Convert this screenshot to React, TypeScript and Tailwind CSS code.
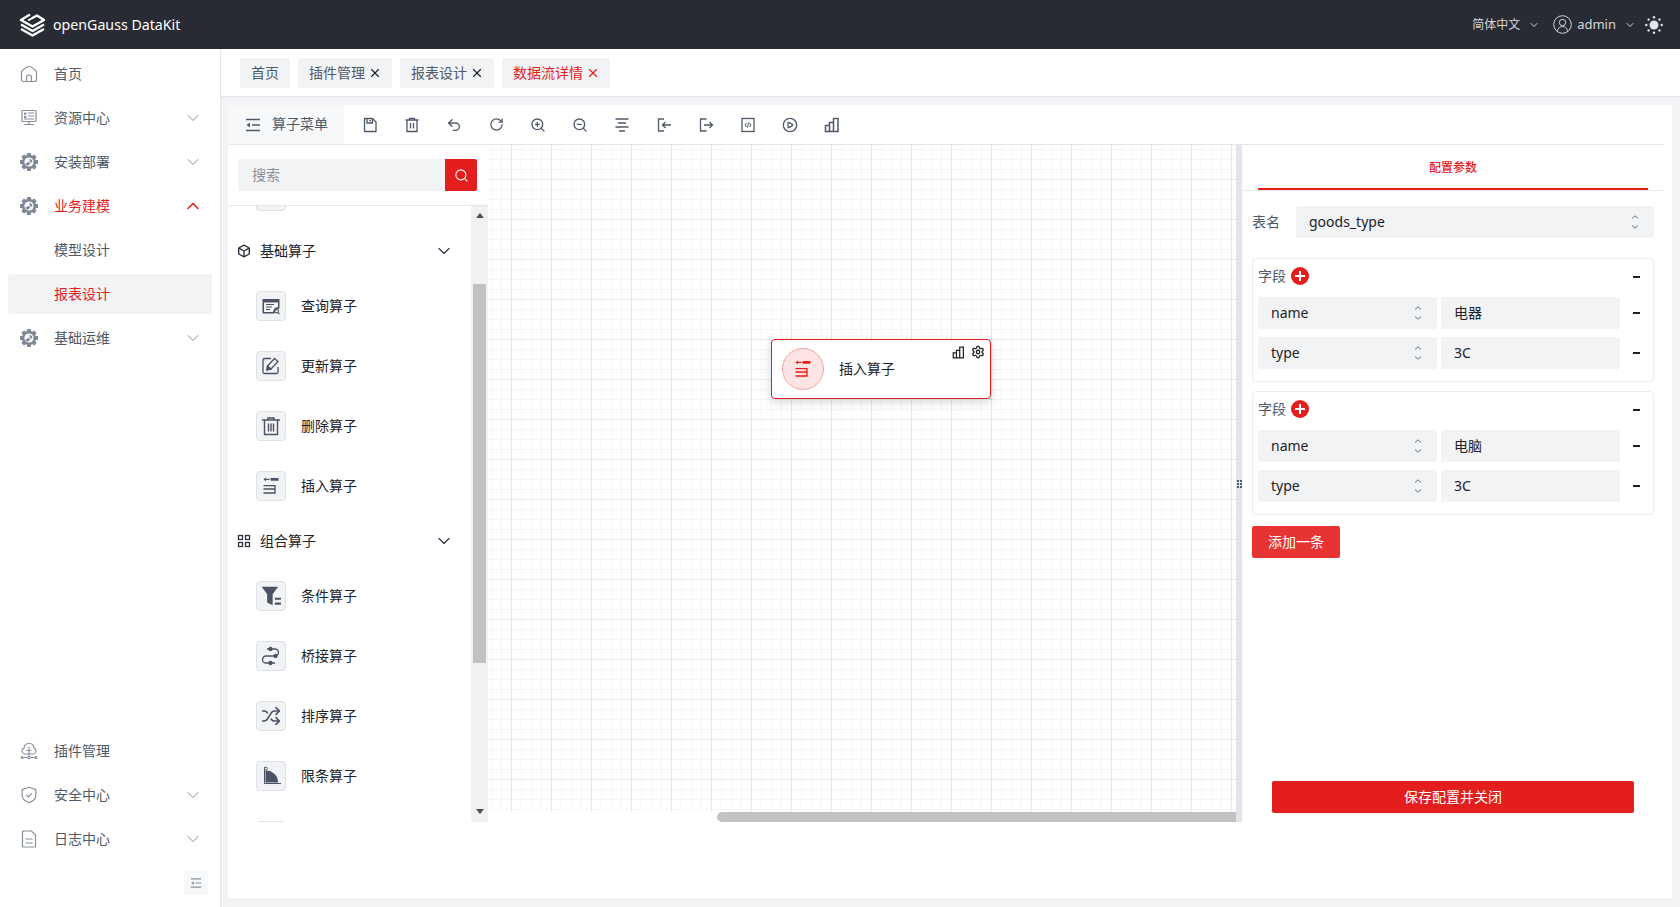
import type { ReactNode } from "react";
import { ChevronDown, ChevronUp, CirclePlay, RotateCw, Search, Settings, Shuffle, Undo2, X, ZoomIn, ZoomOut } from "lucide-react";

/* ---------- 小图标 ---------- */
type IconProps = { className?: string };

const LogoIcon = () => (
  <svg width="27" height="27" viewBox="0 0 27 27" fill="none" stroke="#fff" strokeWidth="2.4" strokeLinejoin="round">
    <path d="M11 3.500 2 9l11.500 6.500L25 9l-7-4.500-5 2.800" />
    <path d="M9 9.500l4.500-2.500" strokeWidth="2" />
    <path d="M2 13.500l11.500 6.500L25 13.500" />
    <path d="M2 18l11.500 6.500L25 18" />
  </svg>
);

const HomeIcon = () => (
  <svg width="18" height="18" viewBox="0 0 18 18" fill="none" stroke="#86909c" strokeWidth="1.200">
    <path d="M1.500 7.500c0-1 .5-1.700 1.200-2.300C4.500 3.700 6.500 1.500 9 1.500s4.500 2.200 6.300 3.700c.7.600 1.200 1.300 1.200 2.300v7a2 2 0 0 1-2 2h-11a2 2 0 0 1-2-2z" strokeLinejoin="round" />
    <path d="M6.500 16.500v-4a2.500 2.500 0 0 1 5 0v4" />
  </svg>
);

const MonitorIcon = () => (
  <svg width="18" height="18" viewBox="0 0 18 18" fill="none" stroke="#86909c" strokeWidth="1.200">
    <rect x="2" y="1.500" width="14" height="11" rx="1" />
    <path d="M8 4h6M8 7h6M4 10h10M9 12.500v2.500M4 15.500h10" />
    <rect x="4" y="3.500" width="2.400" height="2.200" fill="#86909c" stroke="none" />
    <rect x="4" y="6.800" width="2.400" height="2.200" fill="#86909c" stroke="none" />
  </svg>
);

const GearIcon = () => (
  <svg width="18" height="18" viewBox="0 0 18 18">
    <g fill="#7f8894">
      <circle cx="9" cy="9" r="7.200" />
      {[0, 45, 90, 135, 180, 225, 270, 315].map((deg) => (
        <rect key={deg} x="7" y="0" width="4" height="3.400" rx="0.600" transform={`rotate(${deg} 9 9)`} />
      ))}
    </g>
    <circle cx="9" cy="9" r="4.600" fill="#fff" />
    <path d="M9.600 5.800a3.200 3.200 0 0 1 2.600 4.100L9.600 8.800zM8.800 8.800l1.600 1.600-2.600 2.400a3.600 3.600 0 0 1-2.600-2z" fill="#7f8894" />
  </svg>
);

const CloudIcon = () => (
  <svg width="18" height="18" viewBox="0 0 18 18" fill="none" stroke="#86909c" strokeWidth="1.100">
    <path d="M4.500 12A3 3 0 0 1 4 6.200a5 5 0 0 1 10 0 3 3 0 0 1-.5 5.800z" />
    <path d="M9 5v9M6.500 8.500h5M1 15.500h16" />
    <circle cx="9" cy="15.500" r="1.200" fill="#fff" />
    <circle cx="2" cy="15.500" r="1" fill="#fff" />
    <circle cx="16" cy="15.500" r="1" fill="#fff" />
  </svg>
);

const ShieldIcon = () => (
  <svg width="18" height="18" viewBox="0 0 18 18" fill="none" stroke="#86909c" strokeWidth="1.200">
    <path d="M9 1.200 15.800 3.600v6c0 3.400-3 5.800-6.800 7.200-3.800-1.400-6.800-3.800-6.800-7.200v-6z" strokeLinejoin="round" />
    <path d="m6.200 8.800 2.200 2.200 3.600-3.600" />
  </svg>
);

const DocIcon = () => (
  <svg width="18" height="18" viewBox="0 0 18 18" fill="none" stroke="#86909c" strokeWidth="1.200">
    <path d="M2.500 2a1 1 0 0 1 1-1h8l4 4v11a1 1 0 0 1-1 1h-11a1 1 0 0 1-1-1z" />
    <path d="M5.500 9h7M5.500 13h7" />
  </svg>
);

const OutdentIcon = ({ className }: IconProps) => (
  <svg className={className} width="16" height="14" viewBox="0 0 16 14" fill="none" stroke="currentColor" strokeWidth="1.400">
    <path d="M1 1.500h14M7 7h8M1 12.500h14" />
    <path d="M5 4.500v5L1.500 7z" fill="currentColor" stroke="none" />
  </svg>
);

const SunIcon = () => (
  <svg width="18" height="18" viewBox="0 0 18 18" fill="#e5e6eb">
    <circle cx="9" cy="9" r="4.500" />
    {[0, 45, 90, 135, 180, 225, 270, 315].map((deg) => (
      <circle key={deg} cx="9" cy="1.300" r="1.200" transform={`rotate(${deg} 9 9)`} />
    ))}
  </svg>
);

const UserIcon = () => (
  <svg width="19" height="19" viewBox="0 0 19 19" fill="none" stroke="#d4d6db" strokeWidth="1">
    <circle cx="9.500" cy="9.500" r="8.800" />
    <circle cx="9.500" cy="7.500" r="3.200" />
    <path d="M4.500 15.800c.6-3 2.600-4.300 5-4.300s4.400 1.300 5 4.300" />
  </svg>
);

const UpDownIcon = () => (
  <svg width="10" height="16" viewBox="0 0 10 16" fill="none" stroke="#6b7280" strokeWidth="1">
    <path d="M2 4.500 5 1.800l3 2.700M2 11.500l3 2.700 3-2.700" />
  </svg>
);

/* 工具栏 */
const tool = { width: 16, height: 16, viewBox: "0 0 16 16", fill: "none", stroke: "currentColor", strokeWidth: 1.300 };

const SaveTool = () => (
  <svg {...tool}>
    <path d="M2.500 1.500h8l3.500 3.500v9.500h-11.500z" strokeLinejoin="round" />
    <path d="M5 1.500v4.500h5.500v-4.500" />
    <path d="M7.500 3h1.500v1.500h-1.500z" fill="currentColor" stroke="none" />
  </svg>
);
const TrashTool = () => (
  <svg {...tool}>
    <path d="M1.500 3h13M5.500 3V1.300h5V3M3 3v11.500h10V3M6.500 6v5.500M9.500 6v5.500" />
  </svg>
);
const AlignTool = () => (
  <svg {...tool}>
    <path d="M1.500 2h13M4 6h8M1.500 10h13M5 14h6" />
  </svg>
);
const ImportTool = () => (
  <svg {...tool}>
    <path d="M8 2H2.500v12H8M15 8H6.500M9.500 5 6.500 8l3 3" />
  </svg>
);
const ExportTool = () => (
  <svg {...tool}>
    <path d="M8.500 2H2.500v12H8.500M6 8h8.500M11.500 5l3 3-3 3" />
  </svg>
);
const CodeTool = () => (
  <svg {...tool}>
    <rect x="2" y="1.500" width="12" height="13" />
    <path d="M6.500 6 5 8l1.500 2M9.500 6l1.500 2-1.500 2M8.600 5.500l-1.200 5" strokeWidth="1" />
  </svg>
);
const BarsTool = ({ size = 16, color = "currentColor" }: { size?: number; color?: string }) => (
  <svg width={size} height={size} viewBox="0 0 16 16" fill="none" stroke={color} strokeWidth="1.500">
    <path d="M1.500 14.500v-6h4v6zM5.500 14.500v-9h4v9zM9.500 14.500V1.500h4.500v13z" />
  </svg>
);

/* 算子 */
const op = { width: 20, height: 20, viewBox: "0 0 20 20", fill: "none" };
const dark = "#4a5263";

const QueryOp = () => (
  <svg {...op}>
    <path d="M1.500 3h17v9.500a5 5 0 0 0-5 5h-12z" fill={dark} />
    <path d="M3 6.500h14V11a6 6 0 0 0-5 5H3z" fill="#f2f3f5" />
    <path d="M5 8.500h8M5 11h6M5 13.500h4" stroke={dark} strokeWidth="1.200" />
    <circle cx="15.500" cy="15" r="1.900" stroke={dark} strokeWidth="1.100" />
    <path d="m17 16.500 1.500 1.500" stroke={dark} strokeWidth="1.100" />
  </svg>
);
const EditOp = () => (
  <svg {...op} stroke={dark} strokeWidth="1.300">
    <path d="M10 2.500H3.500a1.500 1.500 0 0 0-1.500 1.500v12a1.500 1.500 0 0 0 1.500 1.500h12a1.500 1.500 0 0 0 1.500-1.500V11" />
    <path d="m6.500 10 7-7.500 3.500 3-7 7.500-4 1z" />
    <path d="M6.500 10l-.5 4 4-1z" fill={dark} />
  </svg>
);
const TrashOp = () => (
  <svg {...op} stroke={dark} strokeWidth="1.400">
    <path d="M1 4h18M7 4V2h6v2M3.500 4v14.500h13V4M7.500 7.500v8M10 7.500v8M12.500 7.500v8" />
  </svg>
);
const InsertOp = ({ color = dark }: { color?: string }) => (
  <svg {...op}>
    <path d="M9.500 2h8v2.700h-8z" fill={color} />
    <path d="M4 3.350h4.500" stroke={color} strokeWidth="1.200" />
    <path d="M5 1.500v3.700L2.500 3.350z" fill={color} />
    <path d="M2.500 9.700h11.500M2.500 13h11.500M2.500 17h11.500M14 9v8.700" stroke={color} strokeWidth="1.300" />
  </svg>
);
const FilterOp = () => (
  <svg {...op} width={22} height={22}>
    <path d="M1.500 1.500h15l-5 7v10l-5-2.500v-7.500z" fill={dark} />
    <path d="M13.500 11.500h5.500v2h-5.500zM13.500 16h5.500v2h-5.500z" fill={dark} />
  </svg>
);
const BridgeOp = () => (
  <svg {...op} stroke={dark} strokeWidth="1.300">
    <path d="M6 3h8a3 3 0 0 1 0 7H5a3.500 3.500 0 0 0 0 7h9" />
    <circle cx="9.500" cy="3" r="1.500" fill={dark} />
    <circle cx="14.500" cy="10" r="1.500" fill={dark} />
    <circle cx="9.500" cy="17" r="1.500" fill={dark} />
  </svg>
);
const LimitOp = () => (
  <svg {...op}>
    <path d="M3.500 1v16.500H20" stroke={dark} strokeWidth="1" />
    <path d="M4.500 4.500A12 12 0 0 1 17 16.500H4.500z" fill={dark} />
    <circle cx="5" cy="2.500" r="1.400" fill="#f2f3f5" stroke={dark} strokeWidth="0.800" />
  </svg>
);

const CubeIcon = () => (
  <svg width="14" height="14" viewBox="0 0 14 14" fill="none" stroke="#2b3240" strokeWidth="1.400" strokeLinejoin="round">
    <path d="M7 1.200 12.300 4v6L7 12.800 1.700 10V4z" />
    <path d="M1.900 4.200 7 7l5.100-2.800M7 7v5.600" />
  </svg>
);
const GridIcon = () => (
  <svg width="14" height="14" viewBox="0 0 14 14" fill="none" stroke="#2b3240" strokeWidth="1.300">
    <rect x="1.500" y="1.500" width="4" height="4" />
    <rect x="8.500" y="1.500" width="4" height="4" />
    <rect x="1.500" y="8.500" width="4" height="4" />
    <rect x="8.500" y="8.500" width="4" height="4" />
  </svg>
);

/* ---------- 侧边栏 ---------- */
const MenuItem = ({ icon, label, open, active, sub, selected }: {
  icon?: ReactNode; label: string; open?: boolean; active?: boolean; sub?: boolean; selected?: boolean;
}) => (
  <div className={`mx-2 flex h-10 w-[204px] items-center rounded-[3px] ${selected ? "bg-[#f2f3f5]" : ""}`}>
    <span className="flex w-[46px] shrink-0 justify-center pr-[4px]">{icon}</span>
    <span className={`flex-1 text-sm ${active || selected ? "text-[#e41d1d]" : "text-[#4e5969]"}`}>{label}</span>
    {!sub && open === false && <ChevronDown size={20} strokeWidth={1.200} className="mr-[9px] text-[#86909c]" />}
    {!sub && open === true && <ChevronUp size={20} strokeWidth={1.800} className="mr-[9px] text-[#e41d1d]" />}
  </div>
);

const Sidebar = () => (
  <aside className="flex w-[221px] shrink-0 flex-col justify-between border-r border-[#e5e6eb] bg-white pt-[5px] pb-3">
    <div className="flex flex-col gap-1">
      <MenuItem icon={<HomeIcon />} label="首页" />
      <MenuItem icon={<MonitorIcon />} label="资源中心" open={false} />
      <MenuItem icon={<GearIcon />} label="安装部署" open={false} />
      <MenuItem icon={<GearIcon />} label="业务建模" open active />
      <MenuItem label="模型设计" sub />
      <MenuItem label="报表设计" sub selected />
      <MenuItem icon={<GearIcon />} label="基础运维" open={false} />
    </div>
    <div>
      <div className="flex flex-col gap-1">
        <MenuItem icon={<CloudIcon />} label="插件管理" />
        <MenuItem icon={<ShieldIcon />} label="安全中心" open={false} />
        <MenuItem icon={<DocIcon />} label="日志中心" open={false} />
      </div>
      <div className="mt-3 mr-3 ml-auto flex h-6 w-6 items-center justify-center rounded-[2px] bg-[#f7f8fa] text-[#86909c]">
        <OutdentIcon className="h-3 w-3" />
      </div>
    </div>
  </aside>
);

/* ---------- 标签 ---------- */
const Tab = ({ label, closable, active }: { label: string; closable?: boolean; active?: boolean }) => (
  <div className={`flex h-[30px] items-center gap-[3px] rounded-[2px] bg-[#f2f3f5] pl-[11px] text-sm ${closable ? "pr-[10px]" : "pr-[11px]"} ${active ? "text-[#e41d1d]" : "text-[#4e5969]"}`}>
    {label}
    {closable && <X size={14} strokeWidth={2} className={active ? "text-[#e41d1d]" : "text-[#1d2129]"} />}
  </div>
);

/* ---------- 算子菜单 ---------- */
const OpBox = ({ children }: { children?: ReactNode }) => (
  <div className="flex h-[30px] w-[30px] items-center justify-center rounded-[4px] border border-[#dfe1e8] bg-[#f2f3f5]">{children}</div>
);

const OpRow = ({ icon, label }: { icon: ReactNode; label: string }) => (
  <div className="flex h-[60px] items-center gap-[15px] pl-7 text-sm text-[#1d2129]">
    <OpBox>{icon}</OpBox>
    {label}
  </div>
);

const OpGroup = ({ icon, label }: { icon: ReactNode; label: string }) => (
  <div className="flex h-[50px] items-center pr-[17px] pl-2 text-sm text-[#1d2129]">
    <span className="flex w-[15px] justify-center">{icon}</span>
    <span className="ml-[9px] flex-1">{label}</span>
    <ChevronDown size={20} strokeWidth={1.400} className="text-[#2b3240]" />
  </div>
);

const OperatorPanel = () => (
  <div className="flex w-[260px] shrink-0 flex-col">
    <div className="flex h-[61px] shrink-0 border-b border-[#e5e6eb] pt-[14px] pl-[10px]">
      <div className="flex h-8 w-[239px] overflow-hidden rounded-[2px]">
        <div className="flex flex-1 items-center bg-[#f2f3f5] pl-[14px] text-sm text-[#86909c]">搜索</div>
        <div className="flex w-8 items-center justify-center bg-[#e41d1d]">
          <Search size={15} strokeWidth={1.800} className="text-white" />
        </div>
      </div>
    </div>
    <div className="flex h-[616px] shrink-0">
      <div className="w-[243px] overflow-hidden">
        {/* 上面被滚动裁掉的一行 */}
        <div className="h-[20px] pl-7">
          <div className="h-[5px] w-[30px] rounded-b-[4px] border border-t-0 border-[#dfe1e8] bg-[#f2f3f5]" />
        </div>
        <OpGroup icon={<CubeIcon />} label="基础算子" />
        <OpRow icon={<QueryOp />} label="查询算子" />
        <OpRow icon={<EditOp />} label="更新算子" />
        <OpRow icon={<TrashOp />} label="删除算子" />
        <OpRow icon={<InsertOp />} label="插入算子" />
        <OpGroup icon={<GridIcon />} label="组合算子" />
        <OpRow icon={<FilterOp />} label="条件算子" />
        <OpRow icon={<BridgeOp />} label="桥接算子" />
        <OpRow icon={<Shuffle size={20} strokeWidth={2} color={dark} />} label="排序算子" />
        <OpRow icon={<LimitOp />} label="限条算子" />
        <div className="mt-[15px] pl-7">
          <OpBox />
        </div>
      </div>
      {/* 滚动条 */}
      <div className="flex w-[17px] flex-col items-center bg-[#f1f1f1]">
        <div className="mt-[7px] h-0 w-0 border-x-4 border-b-[5px] border-x-transparent border-b-[#505050]" />
        <div className="mt-[66px] h-[379px] w-[13px] bg-[#c1c1c1]" />
        <div className="mt-[146px] h-0 w-0 border-x-4 border-t-[5px] border-x-transparent border-t-[#505050]" />
      </div>
    </div>
  </div>
);

/* ---------- 画布 ---------- */
const Canvas = () => (
  <div className="flex h-[677px] flex-1 flex-col">
    <div className="relative flex-1 overflow-hidden bg-[linear-gradient(#e9e9ec_1px,transparent_1px),linear-gradient(90deg,#e6e6e9_1px,transparent_1px),linear-gradient(#f5f5f6_1px,transparent_1px),linear-gradient(90deg,#f5f5f6_1px,transparent_1px)] bg-[size:40px_40px,40px_40px,10px_10px,10px_10px] bg-[position:0_34px,23px_0,0_4px,3px_0]">
      <div className="absolute top-[194px] left-[283px] flex h-[60px] w-[220px] items-center rounded-[4px] border-[1.500px] border-[#e41d1d] bg-white pl-[10px] shadow-[0_3px_10px_rgba(80,90,110,0.25)]">
        <div className="flex h-[42px] w-[42px] items-center justify-center rounded-full border border-[#f5a3a3] bg-[#fce4e4]">
          <InsertOp color="#e41d1d" />
        </div>
        <span className="ml-[15px] text-sm text-[#1d2129]">插入算子</span>
        <div className="absolute top-[5px] right-[5px] flex items-center gap-[6px]">
          <BarsTool size={13} color="#1d2129" />
          <Settings size={14} strokeWidth={2.200} color="#1d2129" />
        </div>
      </div>
    </div>
    <div className="flex h-[10px] shrink-0 justify-end">
      <div className="h-full w-[519px] rounded-l-full bg-[#c1c2c4]" />
    </div>
  </div>
);

/* ---------- 配置参数 ---------- */
const Field = ({ children, className }: { children: ReactNode; className?: string }) => (
  <div className={`flex h-8 items-center rounded-[2px] bg-[#f2f3f5] text-sm text-[#1d2129] ${className ?? ""}`}>{children}</div>
);

const Minus = () => (
  <div className="flex w-8 shrink-0 justify-center">
    <div className="h-[2px] w-[7px] bg-[#1d2129]" />
  </div>
);

const KvRow = ({ k, v }: { k: string; v: string }) => (
  <div className="flex items-center">
    <Field className="mr-1 w-[179px] justify-between pr-[14px] pl-[13px]">
      {k}
      <UpDownIcon />
    </Field>
    <Field className="w-[179px] pl-[13px]">{v}</Field>
    <Minus />
  </div>
);

const FieldCard = ({ value }: { value: string }) => (
  <div className="flex h-[124px] w-[402px] flex-col gap-2 rounded-[4px] border border-[#ebedf0] pl-[5px]">
    <div className="flex h-[34px] w-[394px] shrink-0 items-center text-sm text-[#4e5969]">
      字段
      <span className="relative ml-[5px] h-[18px] w-[18px] rounded-full bg-[#e41d1d]">
        <span className="absolute top-[4px] left-[8px] h-[10px] w-[2px] bg-white" />
        <span className="absolute top-[8px] left-[4px] h-[2px] w-[10px] bg-white" />
      </span>
      <span className="mt-[2px] ml-auto">
        <Minus />
      </span>
    </div>
    <div className="-mt-1 flex flex-col gap-2">
      <KvRow k="name" v={value} />
      <KvRow k="type" v="3C" />
    </div>
  </div>
);

const ConfigPanel = () => (
  <div className="flex w-[422px] shrink-0 flex-col pb-[85px]">
    <div className="h-[46px] shrink-0 border-b border-[#e5e6eb] px-4">
      <div className="flex h-[45px] items-center justify-center border-b-2 border-[#e41d1d] pt-[2px] text-xs font-medium text-[#e41d1d]">配置参数</div>
    </div>
    <div className="flex flex-1 flex-col px-[10px] pt-[15px]">
      <div className="flex items-center">
        <span className="w-[44px] text-sm text-[#4e5969]">表名</span>
        <Field className="w-[358px] justify-between pr-[14px] pl-[13px]">
          goods_type
          <UpDownIcon />
        </Field>
      </div>
      <div className="mt-5 flex flex-col gap-[9px]">
        <FieldCard value="电器" />
        <FieldCard value="电脑" />
      </div>
      <div className="mt-[11px] flex h-8 w-[88px] items-center justify-center rounded-[2px] bg-[#e83333] text-sm text-white">添加一条</div>
      <div className="mt-auto ml-5 flex h-8 w-[362px] items-center justify-center rounded-[2px] bg-[#e41d1d] text-sm text-white">保存配置并关闭</div>
    </div>
  </div>
);

/* ---------- 页面 ---------- */
const tools = [
  <SaveTool key="save" />,
  <TrashTool key="trash" />,
  <Undo2 key="undo" size={16} strokeWidth={2} />,
  <RotateCw key="redo" size={15} strokeWidth={2} />,
  <ZoomIn key="in" size={16} strokeWidth={2} />,
  <ZoomOut key="out" size={16} strokeWidth={2} />,
  <AlignTool key="align" />,
  <ImportTool key="import" />,
  <ExportTool key="export" />,
  <CodeTool key="code" />,
  <CirclePlay key="play" size={16} strokeWidth={2} />,
  <BarsTool key="bars" />,
];

export default function App() {
  return (
    <div className="flex h-[907px] w-[1680px] flex-col overflow-hidden bg-[#f2f3f5] font-['Noto_Sans','Noto_Sans_CJK_SC',sans-serif]">
      {/* 顶部 */}
      <header className="flex h-[49px] shrink-0 items-center bg-[#282b33] pr-[17px] pl-[19px]">
        <LogoIcon />
        <span className="ml-[7px] text-[14.2px] text-white">openGauss DataKit</span>
        <div className="ml-auto flex items-center text-xs text-[#d4d6db]">
          简体中文
          <ChevronDown size={12} strokeWidth={2} className="mr-[13px] ml-[8px]" />
          <UserIcon />
          <span className="ml-[5px] text-[13px]">admin</span>
          <ChevronDown size={12} strokeWidth={2} className="mr-[9px] ml-[8px]" />
          <SunIcon />
        </div>
      </header>

      <div className="flex min-h-0 flex-1">
        <Sidebar />
        <main className="flex min-w-0 flex-1 flex-col">
          <div className="flex h-[48px] shrink-0 items-center gap-2 border-b border-[#e5e6eb] bg-white pl-[19px]">
            <Tab label="首页" />
            <Tab label="插件管理" closable />
            <Tab label="报表设计" closable />
            <Tab label="数据流详情" closable active />
          </div>

          <div className="mt-2 mr-2 mb-[9px] ml-[7px] flex min-h-0 flex-1 flex-col bg-white pr-2">
            {/* 工具栏 */}
            <div className="flex h-10 shrink-0 items-center border-b border-[#e5e6eb] text-[#4e5969]">
              <div className="flex h-full w-[116px] items-center gap-[11px] bg-[#f7f8fa] pl-[17px] text-sm">
                <OutdentIcon className="shrink-0" />
                <span className="-mt-px whitespace-nowrap">算子菜单</span>
              </div>
              <div className="ml-[5px] flex items-center">
                {tools.map((t, i) => (
                  <span key={i} className="flex w-[42px] justify-center">{t}</span>
                ))}
              </div>
            </div>

            <div className="flex min-h-0 flex-1">
              <OperatorPanel />
              <Canvas />
              {/* 拖拽分隔条 */}
              <div className="flex h-[677px] w-[6px] shrink-0 items-center justify-center bg-[#e4e5eb]">
                <div className="grid grid-cols-2 gap-[1px]">
                  {[0, 1, 2, 3, 4, 5].map((d) => (
                    <span key={d} className="h-[2px] w-[2px] bg-[#4e5969]" />
                  ))}
                </div>
              </div>
              <ConfigPanel />
            </div>
          </div>
        </main>
      </div>
    </div>
  );
}
